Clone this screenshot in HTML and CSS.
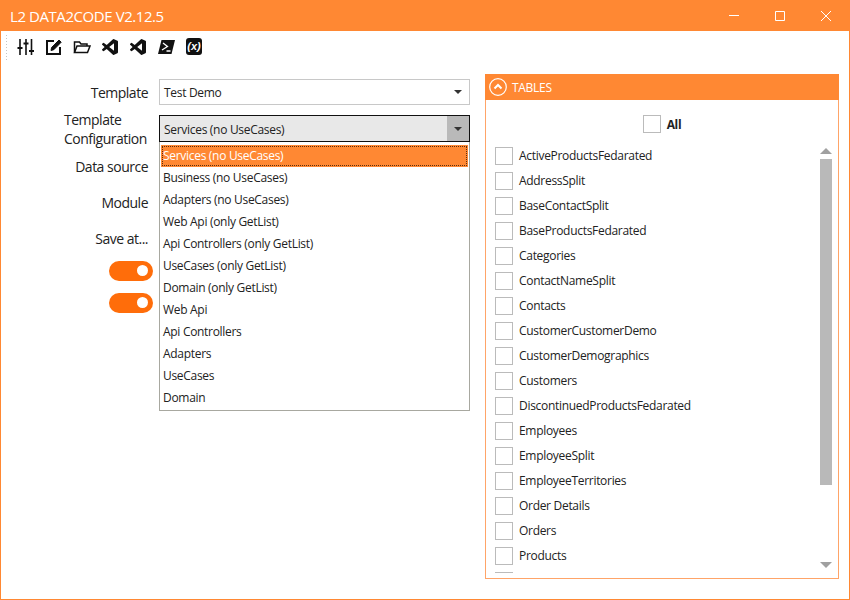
FILE: index.html
```html
<!DOCTYPE html>
<html>
  <head>
    <meta charset="utf-8">
    <title>L2 DATA2CODE</title>
    <link rel="stylesheet" href="styles.css">
  </head>
  <body>
    <svg class="defs" width="0" height="0">
      <symbol id="vscode" viewBox="0 0 24 24">
        <path d="M23.15 2.587L18.21.21a1.494 1.494 0 0 0-1.705.29l-9.46 8.63-4.12-3.128a.999.999 0 0 0-1.276.057L.327 7.261A1 1 0 0 0 .326 8.74L3.899 12 .326 15.26a1 1 0 0 0 .001 1.479L1.65 17.94a.999.999 0 0 0 1.276.057l4.12-3.128 9.46 8.63a1.492 1.492 0 0 0 1.704.29l4.942-2.377A1.5 1.5 0 0 0 24 20.06V3.939a1.5 1.5 0 0 0-.85-1.352zm-5.146 14.861L10.826 12l7.178-5.448v10.896z"/>
      </symbol>
    </svg>

    <div class="window">
      <div class="titlebar">
        <span class="title">L2 DATA2CODE V2.12.5</span>
        <div class="winbtns">
          <svg width="46" height="31" viewBox="0 0 46 31"><path d="M18 15.500h10" stroke="#fff" fill="none"/></svg>
          <svg width="46" height="31" viewBox="0 0 46 31"><path d="M18.500 11.500h9v9h-9z" stroke="#fff" fill="none"/></svg>
          <svg width="46" height="31" viewBox="0 0 46 31"><path d="M18 11l10 10M28 11l-10 10" stroke="#fff" fill="none"/></svg>
        </div>
      </div>

      <div class="toolbar">
        <div class="grip"></div>
        <button class="tool">
          <svg width="18" height="18" viewBox="0 0 18 18" fill="none" stroke="#111" stroke-width="1.600">
            <path d="M3 1v16M9 1v16M14.500 1v16"/>
            <path d="M.5 10h5M6.500 5.500h5M12 13h5" stroke-width="2.200"/>
          </svg>
        </button>
        <button class="tool">
          <svg width="18" height="18" viewBox="0 0 18 18" fill="none" stroke="#111" stroke-width="2">
            <path d="M9 3H2v13h13V9"/>
            <path d="M6 12.500l.6-3L14 2l2.200 2.200-7.400 7.500z" fill="#111" stroke-width="1"/>
          </svg>
        </button>
        <button class="tool">
          <svg width="18" height="18" viewBox="0 0 18 18" fill="none" stroke="#111" stroke-width="1.500">
            <path d="M1.500 14.500V4h5l1.500 2h6v2"/>
            <path d="M1.500 14.500l2.500-6.500h13l-2.500 6.500z"/>
          </svg>
        </button>
        <button class="tool"><svg width="16" height="16" fill="#111"><use href="#vscode"/></svg></button>
        <button class="tool"><svg width="16" height="16" fill="#111"><use href="#vscode"/></svg></button>
        <button class="tool">
          <svg width="17" height="16" viewBox="0 0 17 16">
            <path d="M3.500 1H17L13.500 15H0z" fill="#111"/>
            <path d="M5 4l4.500 3.500L4 11M8.500 12h4" fill="none" stroke="#fff" stroke-width="1.300"/>
          </svg>
        </button>
        <button class="tool">
          <span class="var-icon">(x)</span>
        </button>
      </div>

      <div class="main">
        <div class="form">
          <div class="row">
            <label class="label">Template</label>
            <div class="combo">
              <span>Test Demo</span>
              <span class="arrow"></span>
            </div>
          </div>
          <div class="row row-open">
            <label class="label label-two">Template<br>Configuration</label>
            <div class="combo combo-open">
              <span class="combo-text">Services (no UseCases)</span>
              <span class="arrow"></span>
              <ul class="droplist">
                <li class="selected">Services (no UseCases)</li>
                <li>Business (no UseCases)</li>
                <li>Adapters (no UseCases)</li>
                <li>Web Api (only GetList)</li>
                <li>Api Controllers (only GetList)</li>
                <li>UseCases (only GetList)</li>
                <li>Domain (only GetList)</li>
                <li>Web Api</li>
                <li>Api Controllers</li>
                <li>Adapters</li>
                <li>UseCases</li>
                <li>Domain</li>
              </ul>
            </div>
          </div>
          <div class="row"><label class="label">Data source</label></div>
          <div class="row"><label class="label">Module</label></div>
          <div class="row"><label class="label">Save at...</label></div>
          <div class="toggle"></div>
          <div class="toggle"></div>
        </div>

        <div class="panel">
          <div class="panel-head">
            <svg width="18" height="18" viewBox="0 0 18 18" fill="none" stroke="#fff">
              <circle cx="9" cy="9" r="8.300" stroke-width="1.200"/>
              <path d="M5.500 10.500L9 7l3.500 3.500" stroke-width="2"/>
            </svg>
            <span>TABLES</span>
          </div>
          <div class="panel-body">
            <div class="all">
              <span class="check"></span>
              <b>All</b>
            </div>
            <div class="tables">
              <div class="table-list">
                <div class="item"><span class="check"></span>ActiveProductsFedarated</div>
                <div class="item"><span class="check"></span>AddressSplit</div>
                <div class="item"><span class="check"></span>BaseContactSplit</div>
                <div class="item"><span class="check"></span>BaseProductsFedarated</div>
                <div class="item"><span class="check"></span>Categories</div>
                <div class="item"><span class="check"></span>ContactNameSplit</div>
                <div class="item"><span class="check"></span>Contacts</div>
                <div class="item"><span class="check"></span>CustomerCustomerDemo</div>
                <div class="item"><span class="check"></span>CustomerDemographics</div>
                <div class="item"><span class="check"></span>Customers</div>
                <div class="item"><span class="check"></span>DiscontinuedProductsFedarated</div>
                <div class="item"><span class="check"></span>Employees</div>
                <div class="item"><span class="check"></span>EmployeeSplit</div>
                <div class="item"><span class="check"></span>EmployeeTerritories</div>
                <div class="item"><span class="check"></span>Order Details</div>
                <div class="item"><span class="check"></span>Orders</div>
                <div class="item"><span class="check"></span>Products</div>
                <div class="item"><span class="check"></span></div>
              </div>
              <div class="scrollbar">
                <span class="scroll-up"></span>
                <span class="scroll-thumb"></span>
                <span class="scroll-down"></span>
              </div>
            </div>
          </div>
        </div>
      </div>
    </div>
  </body>
</html>
```

FILE: styles.css
```css
html, body {
  margin: 0;
  padding: 0;
}
body {
  font-family: "Open Sans", "Liberation Sans", sans-serif;
  font-size: 12px;
  letter-spacing: -0.3px;
  color: #222;
  background: #fff;
}
.defs {
  display: block;
  height: 0;
}
.window {
  width: 850px;
  height: 600px;
  box-sizing: border-box;
  border: 1px solid #ff8833;
  border-top: 0;
  display: flex;
  flex-direction: column;
  overflow: hidden;
}

.titlebar {
  height: 31px;
  margin: 0 -1px;
  background: #ff8833;
  display: flex;
  align-items: center;
  justify-content: space-between;
  flex: none;
}
.title {
  margin-left: 10px;
  color: #fff;
  font-size: 15px;
  letter-spacing: -0.43px;
}
.winbtns {
  display: flex;
  margin-right: 1px;
}
.winbtns svg {
  display: block;
}

.toolbar {
  height: 31px;
  flex: none;
  display: flex;
  align-items: center;
  padding-left: 4px;
}
.grip {
  width: 3px;
  height: 26px;
  margin-right: 4px;
  background-image: radial-gradient(#c4c4c4 0.6px, transparent 0.8px);
  background-size: 3px 3px;
}
.tool {
  width: 28px;
  height: 28px;
  padding: 0;
  border: 0;
  background: none;
  display: flex;
  align-items: center;
  justify-content: center;
}
.var-icon {
  width: 16px;
  height: 17px;
  border-radius: 3px;
  background: #111;
  color: #fff;
  font-size: 11px;
  font-style: italic;
  font-weight: 600;
  line-height: 16px;
  text-align: center;
  letter-spacing: 0;
}

.main {
  flex: 1;
  display: flex;
  align-items: flex-start;
  min-height: 0;
}
.form {
  width: 469px;
  margin-top: 17px;
  display: flex;
  flex-direction: column;
  gap: 10px;
}
.row {
  display: flex;
  height: 26px;
  align-items: center;
}
.row-open {
  height: 27px;
  margin-bottom: 1px;
}
.label {
  width: 147px;
  flex: none;
  text-align: right;
  font-size: 14px;
  letter-spacing: -0.5px;
  line-height: 19px;
}
.label-two {
  width: 84px;
  margin-left: 63px;
  text-align: left;
  white-space: nowrap;
}
.combo {
  position: relative;
  margin-left: 11px;
  flex: 1;
  height: 26px;
  box-sizing: border-box;
  border: 1px solid #c8c8c8;
  padding-left: 4px;
  display: flex;
  align-items: center;
  justify-content: space-between;
}
.arrow {
  width: 0;
  height: 0;
  margin-right: 7px;
  border-left: 4px solid transparent;
  border-right: 4px solid transparent;
  border-top: 4px solid #333;
}
.combo-open {
  height: 27px;
  border-color: #111;
  background: #e8e8e8;
  padding-right: 0;
}
.combo-text {
  padding-top: 2px;
}
.combo-open .arrow {
  margin: 0;
  width: 22px;
  height: 25px;
  border: 0;
  background: #b9b9b9;
  position: relative;
}
.combo-open .arrow::after {
  content: "";
  position: absolute;
  left: 7px;
  top: 11px;
  border-left: 4px solid transparent;
  border-right: 4px solid transparent;
  border-top: 4px solid #333;
}
.droplist {
  position: absolute;
  left: -1px;
  right: -1px;
  top: 26px;
  margin: 0;
  padding: 3px 1px 1px;
  list-style: none;
  background: #fff;
  border: 1px solid #a8a8a0;
  border-top: 0;
  z-index: 2;
}
.droplist li {
  height: 22px;
  line-height: 22px;
  padding-left: 2px;
  box-sizing: border-box;
}
.droplist .selected {
  background: #ff8833;
  color: #fff;
  outline: 1px dotted #5a3010;
  outline-offset: -2px;
}

.toggle {
  width: 44px;
  height: 20px;
  margin-left: 108px;
  border-radius: 10px;
  background: #ff6d0a;
  position: relative;
}
.toggle::after {
  content: "";
  position: absolute;
  right: 5px;
  top: 4px;
  width: 11px;
  height: 11px;
  border-radius: 50%;
  background: #fff;
}
.toggle + .toggle {
  margin-top: 2px;
}

.panel {
  width: 354px;
  height: 505px;
  margin: 12px 0 0 15px;
  box-sizing: border-box;
  border: 1px solid #ffa468;
  display: flex;
  flex-direction: column;
}
.panel-head {
  height: 26px;
  margin: -1px -1px 0;
  background: #ff8833;
  color: #fff;
  display: flex;
  align-items: center;
  padding-left: 4px;
  gap: 5px;
  flex: none;
}
.panel-body {
  flex: 1;
  min-height: 0;
  display: flex;
  flex-direction: column;
}
.check {
  width: 18px;
  height: 18px;
  box-sizing: border-box;
  border: 1px solid #bbb;
  flex: none;
  background: #fff;
}
.all {
  height: 18px;
  margin-top: 15px;
  display: flex;
  align-items: center;
  justify-content: center;
  gap: 6px;
}
.tables {
  margin-top: 10px;
  flex: 1;
  min-height: 0;
  position: relative;
  overflow: hidden;
  margin-bottom: 5px;
}
.table-list {
  padding-left: 9px;
}
.item {
  height: 25px;
  display: flex;
  align-items: center;
  gap: 6px;
}
.scrollbar {
  position: absolute;
  right: 6px;
  top: 0;
  bottom: 0;
  width: 12px;
}
.scroll-up, .scroll-down {
  position: absolute;
  left: 0;
  border-left: 6px solid transparent;
  border-right: 6px solid transparent;
}
.scroll-up {
  top: 5px;
  border-bottom: 6px solid #a0a0a0;
}
.scroll-down {
  top: 419px;
  border-top: 6px solid #a0a0a0;
}
.scroll-thumb {
  position: absolute;
  left: 0;
  top: 16px;
  width: 12px;
  height: 326px;
  background: #b9b9b9;
}
```
